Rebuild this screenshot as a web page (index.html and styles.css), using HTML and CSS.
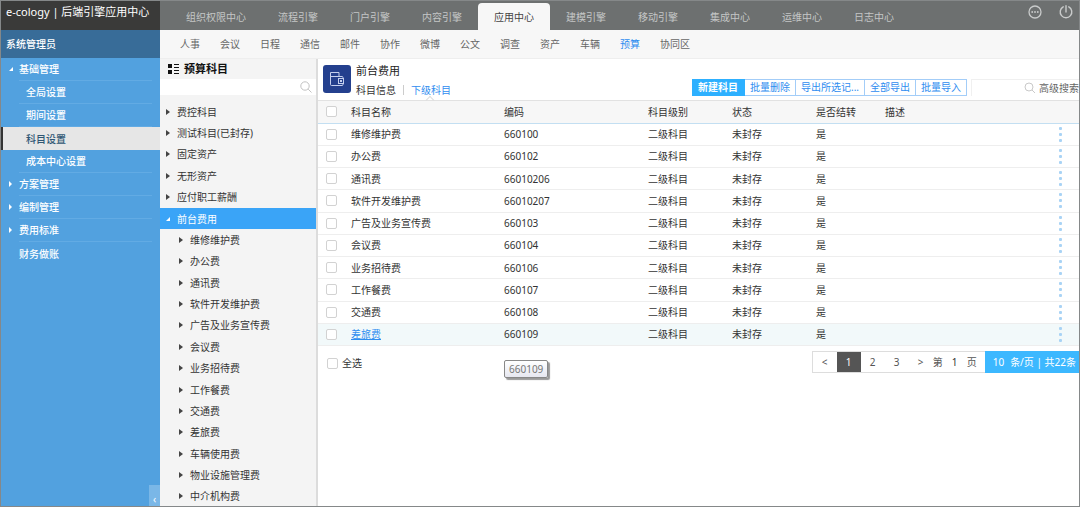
FILE: index.html
```html
<!DOCTYPE html>
<html lang="zh-CN">
  <head>
    <meta charset="utf-8">
    <title>e-cology | 后端引擎应用中心</title>
    <link rel="stylesheet" href="styles.css">
  </head>
  <body>
    <div class="app">

      <aside class="sidebar">
        <div class="brand">e-cology | 后端引擎应用中心</div>
        <div class="user">系统管理员</div>
        <nav class="menu">
          <a href="#" class="parent open">基础管理</a>
          <a href="#" class="child">全局设置</a>
          <a href="#" class="child">期间设置</a>
          <a href="#" class="child current">科目设置</a>
          <a href="#" class="child">成本中心设置</a>
          <a href="#" class="parent">方案管理</a>
          <a href="#" class="parent">编制管理</a>
          <a href="#" class="parent">费用标准</a>
          <a href="#" class="single">财务做账</a>
        </nav>
        <button type="button" class="collapse" aria-label="收起">‹</button>
      </aside>

      <div class="page">
        <header class="topbar">
          <nav class="topnav">
            <a href="#">组织权限中心</a>
            <a href="#">流程引擎</a>
            <a href="#">门户引擎</a>
            <a href="#">内容引擎</a>
            <a href="#" class="active">应用中心</a>
            <a href="#">建模引擎</a>
            <a href="#">移动引擎</a>
            <a href="#">集成中心</a>
            <a href="#">运维中心</a>
            <a href="#">日志中心</a>
          </nav>
          <div class="tools">
            <button type="button" aria-label="更多">
              <svg width="14" height="14" viewBox="0 0 14 14">
                <circle cx="7" cy="7" r="6" fill="none" stroke="#c9cbcb" stroke-width="1.3"/>
                <circle cx="4.2" cy="7" r=".9" fill="#c9cbcb"/>
                <circle cx="7" cy="7" r=".9" fill="#c9cbcb"/>
                <circle cx="9.8" cy="7" r=".9" fill="#c9cbcb"/>
              </svg>
            </button>
            <button type="button" aria-label="退出">
              <svg width="14" height="14" viewBox="0 0 14 14" fill="none" stroke="#c9cbcb" stroke-width="1.4" stroke-linecap="round">
                <path d="M4.2 1.8A5.8 5.8 0 1 0 9.8 1.8"/>
                <path d="M7 .8V7"/>
              </svg>
            </button>
          </div>
        </header>

        <nav class="subnav">
          <a href="#">人事</a>
          <a href="#">会议</a>
          <a href="#">日程</a>
          <a href="#">通信</a>
          <a href="#">邮件</a>
          <a href="#">协作</a>
          <a href="#">微博</a>
          <a href="#">公文</a>
          <a href="#">调查</a>
          <a href="#">资产</a>
          <a href="#">车辆</a>
          <a href="#" class="active">预算</a>
          <a href="#">协同区</a>
        </nav>

        <div class="body">
          <section class="tree">
            <h2>
              <svg width="12" height="12" viewBox="0 0 12 12" fill="#111">
                <rect x="0" y="1" width="4" height="4"/>
                <rect x="0" y="7" width="4" height="4"/>
                <rect x="6" y="1" width="5" height="1"/>
                <rect x="6" y="4" width="5" height="1"/>
                <rect x="6" y="7" width="5" height="1"/>
                <rect x="6" y="10" width="5" height="1"/>
              </svg>
              预算科目
            </h2>
            <div class="tree-search">
              <input type="text" aria-label="搜索科目">
              <button type="button" aria-label="搜索">
                <svg width="12" height="12" viewBox="0 0 12 12" fill="none" stroke="#c2c2c2">
                  <circle cx="5" cy="5" r="4.2"/>
                  <path d="M8.2 8.2L11.5 11.5"/>
                </svg>
              </button>
            </div>
            <div class="nodes">
              <a href="#">费控科目</a>
              <a href="#">测试科目(已封存)</a>
              <a href="#">固定资产</a>
              <a href="#">无形资产</a>
              <a href="#">应付职工薪酬</a>
              <a href="#" class="selected">前台费用</a>
              <a href="#" class="sub">维修维护费</a>
              <a href="#" class="sub">办公费</a>
              <a href="#" class="sub">通讯费</a>
              <a href="#" class="sub">软件开发维护费</a>
              <a href="#" class="sub">广告及业务宣传费</a>
              <a href="#" class="sub">会议费</a>
              <a href="#" class="sub">业务招待费</a>
              <a href="#" class="sub">工作餐费</a>
              <a href="#" class="sub">交通费</a>
              <a href="#" class="sub">差旅费</a>
              <a href="#" class="sub">车辆使用费</a>
              <a href="#" class="sub">物业设施管理费</a>
              <a href="#" class="sub">中介机构费</a>
            </div>
          </section>

          <main class="content">
            <div class="head">
              <div class="head-icon">
                <svg width="16" height="16" viewBox="0 0 16 16" fill="none" stroke="#c5d0ee">
                  <path d="M1.5 4V13.5Q1.5 14.5 2.5 14.5H13Q14 14.5 14 13.5V12.5"/>
                  <path d="M1.5 5.5V1.5H10V5.5"/>
                  <path d="M1.5 5.5H13Q14 5.5 14 6.5V7.5"/>
                  <rect x="9.5" y="7.5" width="5" height="5"/>
                  <rect x="11.5" y="9.5" width="1" height="1"/>
                </svg>
              </div>
              <div class="head-text">
                <h1>前台费用</h1>
                <div class="tabs">
                  <a href="#">科目信息</a>
                  <span class="split"></span>
                  <a href="#" class="active">下级科目</a>
                </div>
              </div>
              <div class="actions">
                <button type="button" class="primary">新建科目</button>
                <button type="button">批量删除</button>
                <button type="button">导出所选记...</button>
                <button type="button">全部导出</button>
                <button type="button">批量导入</button>
              </div>
              <div class="search">
                <input type="text" aria-label="搜索">
                <button type="button" aria-label="搜索">
                  <svg width="12" height="12" viewBox="0 0 12 12" fill="none" stroke="#c9c9c9">
                    <circle cx="5" cy="5" r="4"/>
                    <path d="M8 8L11 11"/>
                  </svg>
                </button>
                <a href="#">高级搜索</a>
              </div>
            </div>

            <table class="grid">
              <colgroup>
                <col class="c-check"><col class="c-name"><col class="c-code"><col class="c-level">
                <col class="c-state"><col class="c-carry"><col><col class="c-more">
              </colgroup>
              <thead>
                <tr>
                  <th><input type="checkbox" aria-label="选择全部"></th>
                  <th>科目名称</th><th>编码</th><th>科目级别</th><th>状态</th><th>是否结转</th><th>描述</th><th></th>
                </tr>
              </thead>
              <tbody>
                <tr>
                  <td><input type="checkbox" aria-label="维修维护费"></td>
                  <td>维修维护费</td><td>660100</td><td>二级科目</td><td>未封存</td><td>是</td><td></td>
                  <td><button type="button" class="more" aria-label="操作"><i></i><i></i><i></i></button></td>
                </tr>
                <tr>
                  <td><input type="checkbox" aria-label="办公费"></td>
                  <td>办公费</td><td>660102</td><td>二级科目</td><td>未封存</td><td>是</td><td></td>
                  <td><button type="button" class="more" aria-label="操作"><i></i><i></i><i></i></button></td>
                </tr>
                <tr>
                  <td><input type="checkbox" aria-label="通讯费"></td>
                  <td>通讯费</td><td>66010206</td><td>二级科目</td><td>未封存</td><td>是</td><td></td>
                  <td><button type="button" class="more" aria-label="操作"><i></i><i></i><i></i></button></td>
                </tr>
                <tr>
                  <td><input type="checkbox" aria-label="软件开发维护费"></td>
                  <td>软件开发维护费</td><td>66010207</td><td>二级科目</td><td>未封存</td><td>是</td><td></td>
                  <td><button type="button" class="more" aria-label="操作"><i></i><i></i><i></i></button></td>
                </tr>
                <tr>
                  <td><input type="checkbox" aria-label="广告及业务宣传费"></td>
                  <td>广告及业务宣传费</td><td>660103</td><td>二级科目</td><td>未封存</td><td>是</td><td></td>
                  <td><button type="button" class="more" aria-label="操作"><i></i><i></i><i></i></button></td>
                </tr>
                <tr>
                  <td><input type="checkbox" aria-label="会议费"></td>
                  <td>会议费</td><td>660104</td><td>二级科目</td><td>未封存</td><td>是</td><td></td>
                  <td><button type="button" class="more" aria-label="操作"><i></i><i></i><i></i></button></td>
                </tr>
                <tr>
                  <td><input type="checkbox" aria-label="业务招待费"></td>
                  <td>业务招待费</td><td>660106</td><td>二级科目</td><td>未封存</td><td>是</td><td></td>
                  <td><button type="button" class="more" aria-label="操作"><i></i><i></i><i></i></button></td>
                </tr>
                <tr>
                  <td><input type="checkbox" aria-label="工作餐费"></td>
                  <td>工作餐费</td><td>660107</td><td>二级科目</td><td>未封存</td><td>是</td><td></td>
                  <td><button type="button" class="more" aria-label="操作"><i></i><i></i><i></i></button></td>
                </tr>
                <tr>
                  <td><input type="checkbox" aria-label="交通费"></td>
                  <td>交通费</td><td>660108</td><td>二级科目</td><td>未封存</td><td>是</td><td></td>
                  <td><button type="button" class="more" aria-label="操作"><i></i><i></i><i></i></button></td>
                </tr>
                <tr class="hover">
                  <td><input type="checkbox" aria-label="差旅费"></td>
                  <td><a href="#">差旅费</a></td>
                  <td class="tip-cell">660109<span class="tip">660109</span></td>
                  <td>二级科目</td><td>未封存</td><td>是</td><td></td>
                  <td><button type="button" class="more" aria-label="操作"><i></i><i></i><i></i></button></td>
                </tr>
              </tbody>
            </table>

            <div class="foot">
              <label class="all"><input type="checkbox"> 全选</label>
              <div class="pager">
                <button type="button">&lt;</button>
                <button type="button" class="on">1</button>
                <button type="button">2</button>
                <button type="button">3</button>
                <button type="button">&gt;</button>
                <label class="jump">第 <input type="text" value="1"> 页</label>
                <div class="size"><span>10</span><span>条/页 | 共22条</span></div>
              </div>
            </div>
          </main>
        </div>
      </div>
    </div>
  </body>
</html>
```

FILE: styles.css
```css
*{
  box-sizing:border-box;
}
html, body, h1, h2{
  margin:0px;
  padding:0px;
}
body, input, button{
  font-family:"Noto Sans", "Noto Sans CJK SC", sans-serif;
  font-size:10px;
  line-height:16px;
  color:#333;
}
body{
  background-color:#fff;
  overflow-x:hidden;
}
a{
  color:inherit;
  text-decoration:none;
  white-space:nowrap;
}
button{
  margin:0px;
  padding:0px;
  border:0px;
  background:none;
  cursor:pointer;
  white-space:nowrap;
}
input[type="text"]{
  min-width:0px;
  margin:0px;
  padding:0px;
  border:0px;
  background:none;
  outline:none;
}
input[type="checkbox"]{
  appearance:none;
  display:block;
  width:11px;
  height:11px;
  margin:0px;
  border:1px solid #d2d2d2;
  border-radius:2px;
  background-color:#fff;
}
svg{
  display:block;
}
.app{
  display:flex;
  min-height:100vh;
  outline:1px solid #858889;
  outline-offset:-1px;
}

/* left menu */
.sidebar{
  display:flex;
  flex-direction:column;
  flex:0 0 160px;
  background-color:#52a1df;
  color:#fff;
}
.brand{
  height:30px;
  padding:4px 6px;
  background-color:#3a3a39;
  font-size:11px;
  white-space:nowrap;
}
.user{
  height:28px;
  padding:6px;
  background-color:#386c98;
  font-weight:500;
}
.menu{
  display:flex;
  flex-direction:column;
  font-weight:500;
}
.menu a{
  display:flex;
  align-items:center;
  height:23px;
  margin:0px 8px 0px 19px;
  border-bottom:1px solid #62abe4;
}
.menu .parent{
  position:relative;
}
.menu .parent::before{
  content:"";
  position:absolute;
  left:-10px;
  border-left:3px solid #fff;
  border-top:3px solid transparent;
  border-bottom:3px solid transparent;
}
.menu .open::before{
  border:0px;
  border-left:4px solid transparent;
  border-bottom:4px solid #fff;
}
.menu .child{
  padding-left:7px;
}
.menu .current{
  margin:0px;
  padding-left:23px;
  border-left:3px solid #333;
  border-bottom:0px;
  background-color:#e6e6e6;
  color:#2f5674;
}
.menu .single{
  border-bottom:0px;
}
.collapse{
  width:11px;
  height:22px;
  margin-top:auto;
  margin-left:auto;
  padding-top:6px;
  background-color:#7ab7e7;
  color:#fff;
}

/* top bars */
.page{
  display:flex;
  flex-direction:column;
  flex:1;
  min-width:0px;
}
.topbar{
  display:flex;
  justify-content:space-between;
  height:30px;
  background-color:#6d7070;
}
.topnav{
  display:flex;
  align-items:flex-end;
  padding-left:10px;
}
.topnav a{
  height:27px;
  padding:6px 16px;
  border-radius:4px 4px 0px 0px;
  color:#c4c6c6;
}
.topnav .active{
  background-color:#f7f7f7;
  color:#444;
}
.tools{
  display:flex;
  gap:17px;
  padding:5px 7px 0px 0px;
  align-items:flex-start;
}
.subnav{
  display:flex;
  gap:20px;
  height:29px;
  padding:6px 20px;
  border-bottom:1px solid #eee;
  background-color:#f7f7f7;
  color:#666;
}
.subnav .active{
  color:#2f8df0;
}
.body{
  display:flex;
  flex:1;
}

/* account tree */
.tree{
  display:flex;
  flex-direction:column;
  flex:0 0 158px;
  min-width:0px;
  border-right:2px solid #dcdcdc;
  background-color:#f4f4f4;
}
.tree h2{
  display:flex;
  gap:4px;
  align-items:center;
  height:20px;
  padding-left:8px;
  font-size:11px;
  color:#111;
}
.tree-search{
  display:flex;
  align-items:center;
  height:16px;
  margin-bottom:6px;
  padding-right:4px;
  background-color:#fff;
}
.tree-search input{
  flex:1;
}
.nodes{
  display:flex;
  flex-direction:column;
  flex:1;
}
.nodes a{
  display:flex;
  flex:1;
  gap:6px;
  align-items:center;
  min-height:21px;
  padding-left:6px;
}
.nodes a::before{
  content:"";
  margin-right:1px;
  border-left:4px solid #444;
  border-top:3px solid transparent;
  border-bottom:3px solid transparent;
}
.nodes .sub{
  padding-left:19px;
}
.nodes .selected{
  background-color:#3aa4f7;
  color:#fff;
}
.nodes .selected::before{
  border:0px;
  border-left:4px solid transparent;
  border-bottom:4px solid #fff;
}

/* content */
.content{
  flex:1;
  min-width:0px;
}
.head{
  display:flex;
  height:42px;
  padding-left:5px;
  border-bottom:1px solid #e2e2e2;
}
.head-icon{
  display:flex;
  justify-content:center;
  align-items:center;
  width:28px;
  height:28px;
  margin-top:6px;
  border-radius:3px;
  background-color:#24408e;
}
.head-text{
  flex:1;
  padding:4px 0px 0px 5px;
}
.head h1{
  font-size:11px;
  font-weight:400;
  color:#222;
}
.tabs{
  display:flex;
  gap:7px;
  padding-top:3px;
}
.split{
  width:1px;
  height:10px;
  margin-top:3px;
  background-color:#ccc;
}
.tabs .active{
  position:relative;
  color:#2f8df0;
}
.tabs .active::after{
  content:"";
  position:absolute;
  left:16px;
  top:15px;
  width:5px;
  height:5px;
  border:1px solid #ddd;
  border-right:0px;
  border-bottom:0px;
  transform:rotate(45deg);
}
.actions{
  display:flex;
  align-self:flex-end;
  margin-bottom:4px;
}
.actions button{
  height:17px;
  padding:0px 5px;
  border:1px solid #a3cdf8;
  border-left:0px;
  color:#2f8df0;
  line-height:15px;
}
.actions .primary{
  padding:0px 6px;
  border-color:#2db0ff;
  background-color:#2db0ff;
  color:#fff;
  font-weight:700;
}
.search{
  display:flex;
  align-self:flex-end;
  height:17px;
  margin:0px 0px 4px 4px;
  padding-right:1px;
  border-top:1px solid #f0f0f0;
  border-left:1px solid #f0f0f0;
  color:#666;
}
.search input{
  width:52px;
}
.search a{
  padding-left:3px;
}

/* table */
.grid{
  width:100%;
  height:245px;
  table-layout:fixed;
  border-collapse:collapse;
}
.c-check{ width:33px; }
.c-name{ width:153px; }
.c-code{ width:144px; }
.c-level{ width:84px; }
.c-state{ width:84px; }
.c-carry{ width:69px; }
.c-more{ width:40px; }
.grid th, .grid td{
  height:22px;
  padding:0px;
  text-align:left;
  font-weight:400;
  border-bottom:1px solid #eee;
}
.grid th{
  background-color:#f7f7f7;
  border-bottom:1px solid #c3dff2;
}
.grid th:first-child, .grid td:first-child{
  padding-left:8px;
}
.grid .hover td{
  background-color:#f2f9fa;
}
.grid a{
  color:#2f8df0;
  text-decoration:underline;
}
.more{
  display:flex;
  flex-direction:column;
  gap:3px;
  width:3px;
  margin:0px auto;
}
.more i{
  width:3px;
  height:3px;
  border-radius:1px;
  background-color:#a9d3f5;
}
.tip-cell{
  position:relative;
}
.tip{
  position:absolute;
  left:0px;
  top:36px;
  padding:0px 4px;
  border:1px solid #888;
  border-radius:2px;
  background:linear-gradient(#fff, #e6e7f0);
  box-shadow:2px 2px 1px #999;
  color:#777;
}

/* footer */
.foot{
  display:flex;
  justify-content:space-between;
  align-items:flex-start;
  padding:5px 0px 0px 9px;
}
.all{
  display:flex;
  gap:4px;
  align-items:center;
  padding-top:4px;
}
.pager{
  display:flex;
  height:22px;
  border:1px solid #ddd;
  border-right:0px;
  color:#555;
}
.pager button{
  width:24px;
  color:#555;
}
.pager .on{
  background-color:#555;
  color:#fff;
}
.jump{
  display:flex;
  align-items:center;
  padding-right:8px;
}
.jump input{
  width:24px;
  text-align:center;
}
.size{
  display:flex;
  gap:6px;
  align-items:center;
  margin:-1px 0px;
  padding:0px 4px 0px 8px;
  background-color:#3cb8ff;
  color:#fff;
  white-space:nowrap;
}
```
